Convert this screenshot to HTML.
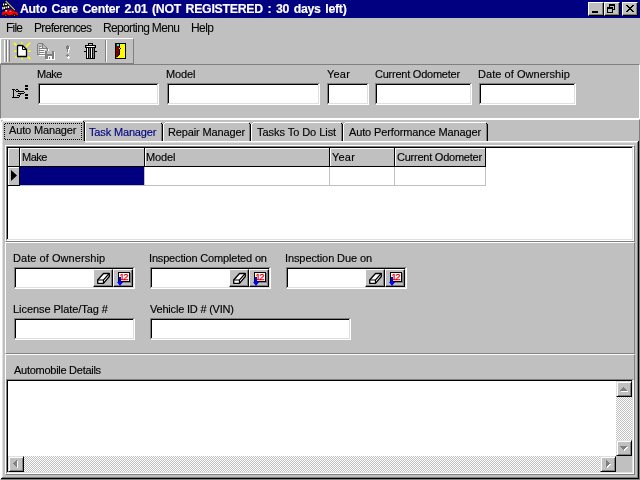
<!DOCTYPE html>
<html>
<head>
<meta charset="utf-8">
<title>Auto Care Center 2.01</title>
<style>
html,body{margin:0;padding:0;}
body{width:640px;height:480px;overflow:hidden;background:#c0c0c0;position:relative;
  font-family:"Liberation Sans",sans-serif;font-size:11px;color:#000;}
.a{position:absolute;}
svg{position:absolute;overflow:visible;}
.t{position:absolute;white-space:nowrap;line-height:13px;height:13px;will-change:transform;-webkit-text-stroke:0.15px currentColor;}
.m{font-size:12px;line-height:14px;height:14px;-webkit-text-stroke:0.05px currentColor;}
#title{left:0;top:0;width:640px;height:18px;background:#000080;}
#title .cap{left:20px;top:1px;color:#fff;font-weight:bold;font-size:12.3px;line-height:16px;height:16px;}
.tb{position:absolute;top:2px;width:16px;height:14px;background:#c0c0c0;box-sizing:border-box;
  border:1px solid;border-color:#fff #000 #000 #fff;box-shadow:inset -1px -1px 0 #808080;}
.inp{position:absolute;background:#fff;box-sizing:border-box;border:1px solid;border-color:#808080 #fff #fff #808080;
  box-shadow:inset -1px -1px 0 #dfdfdf,inset 1px 1px 0 #000;}
.sunk1{position:absolute;box-sizing:border-box;border:1px solid;border-color:#808080 #fff #fff #808080;}
.raised{position:absolute;box-sizing:border-box;border:1px solid;border-color:#fff #808080 #808080 #fff;}
.sbtn{position:absolute;width:16px;height:16px;background:#c0c0c0;box-sizing:border-box;border:1px solid;border-color:#dfdfdf #000 #000 #dfdfdf;
  box-shadow:inset 1px 1px 0 #fff,inset -1px -1px 0 #808080;}
.track{position:absolute;background-color:#fff;
  background-image:linear-gradient(45deg,#c0c0c0 25%,transparent 25%,transparent 75%,#c0c0c0 75%),linear-gradient(45deg,#c0c0c0 25%,transparent 25%,transparent 75%,#c0c0c0 75%);
  background-size:2px 2px;background-position:0 0,1px 1px;}
.dbtn{position:absolute;top:269px;width:20px;height:18px;background:#c0c0c0;box-sizing:border-box;border:1px solid;border-color:#fff #000 #000 #fff;
  box-shadow:inset -1px -1px 0 #808080;}
.hc{position:absolute;top:148px;height:18px;background:#c0c0c0;box-sizing:border-box;border-top:1px solid #fff;border-left:1px solid #fff;}
.cal{position:absolute;left:4px;top:2px;padding-right:1px;width:12px;height:10px;box-sizing:border-box;border:1px solid #000;background:#fff;
  color:#f00;font-size:9px;line-height:8px;text-align:center;letter-spacing:-0.9px;text-indent:0;-webkit-text-stroke:0.3px #f00;box-shadow:1px 1px 0 #808080;}
</style>
</head>
<body>

<!-- title bar -->
<div id="title" class="a">
  <svg id="appicon" style="left:2px;top:1px" width="17" height="17" viewBox="0 0 17 17">
    <path d="M0.200 3L2.800 0.800L7.600 5.400L6 8.600L1 9.600L0 6Z" fill="#000"/>
    <path d="M1 2.400h1.100v2.200h-1.100zM2.900 2.600h2.200v1.300h-2.200zM0.250 6.100h1.150v2.300h-1.150zM1.800 5.800h1.100v2.200h-1.100zM3.600 5.400h1.300v1.900h-1.300zM5.700 5h1.500v1.900h-1.500z" fill="#fff"/>
    <path d="M3.400 0.200L12.600 9.400" stroke="#000" stroke-width="1.600" fill="none"/>
    <path d="M3.700 0L12.900 9.200" stroke="#c8c070" stroke-width="1.100" fill="none"/>
    <path d="M0.300 14.800V12.500Q0.300 11 2.200 10.800L3.300 10.500L4.800 8.900H10L12.300 10.700Q16.200 11.200 16.200 13.200V14.800Z" fill="#000"/>
    <path d="M0 12.300Q0 10.500 2 10.400L3.300 10.200L5 8.600H10L12.500 10.500Q16 11 16 12.700V13.300Q16 14.200 14.500 14.200H1Q0 14.200 0 13.300Z" fill="#f00"/>
    <path d="M6.300 9.300H9.800L11.300 10.500H6.300Z" fill="#600000"/>
    <path d="M7.300 9.800h2.200v0.700h-2.200z" fill="#fff"/>
    <path d="M3.400 9h1.500v1.500h-1.500z" fill="#fff"/>
    <circle cx="3.800" cy="14.300" r="1.700" fill="#000"/><circle cx="12.400" cy="14.300" r="1.700" fill="#000"/>
    <circle cx="3.800" cy="14.300" r="0.700" fill="#909090"/><circle cx="12.400" cy="14.300" r="0.700" fill="#909090"/>
  </svg>
  <div class="t cap" style="letter-spacing:-0.27px;word-spacing:1.5px">Auto Care Center 2.01 (NOT REGISTERED : 30 days left)</div>
  <div class="tb" style="left:588px"><div class="a" style="left:3px;top:8px;width:6px;height:2px;background:#000"></div></div>
  <div class="tb" style="left:604px">
    <div class="a" style="left:4px;top:1px;width:6px;height:6px;box-sizing:border-box;border:1px solid #000;border-top-width:2px"></div>
    <div class="a" style="left:2px;top:4px;width:6px;height:6px;box-sizing:border-box;border:1px solid #000;border-top-width:2px;background:#c0c0c0"></div>
  </div>
  <div class="tb" style="left:622px">
    <svg style="left:3px;top:2px" width="8" height="7" viewBox="0 0 8 7" shape-rendering="crispEdges"><path d="M0 0h2v1h1v1h2v-1h1v-1h2v1h-1v1h-1v1h-1v1h1v1h1v1h1v1h-2v-1h-1v-1h-2v1h-1v1h-2v-1h1v-1h1v-1h1v-1h-1v-1h-1v-1h-1z" fill="#000"/></svg>
  </div>
</div>

<!-- menu -->
<div class="t m" style="left:6px;top:21px;letter-spacing:-0.8px">File</div>
<div class="t m" style="left:34px;top:21px;letter-spacing:-0.67px">Preferences</div>
<div class="t m" style="left:103px;top:21px;letter-spacing:-0.65px">Reporting Menu</div>
<div class="t m" style="left:191px;top:21px;letter-spacing:-0.57px">Help</div>

<!-- toolbar -->
<div class="a" id="toolbar" style="left:0;top:38px;width:134px;height:26px;box-sizing:border-box;border-top:1px solid #fff;border-left:1px solid #fff;border-right:1px solid #808080;border-bottom:1px solid #808080"></div>
<svg id="tbicons" style="left:0;top:38px" width="134" height="26" viewBox="0 38 134 26" shape-rendering="crispEdges">
  <!-- gripper -->
  <rect x="4" y="40" width="1" height="22" fill="#fff"/><rect x="6" y="40" width="1" height="22" fill="#808080"/>
  <rect x="7" y="40" width="1" height="22" fill="#fff"/><rect x="9" y="40" width="1" height="22" fill="#808080"/>
  <!-- new document -->
  <g fill="#ff0" shape-rendering="auto" stroke="#ff0" stroke-width="1.600" stroke-linecap="square">
    <path d="M14.500 43.500L16 45M21.800 43v1.200M29.500 43.500L26.500 46.500M14.800 51.200h1.400M28.500 51.200h1.400M15.800 57.200l1-1M22 57.800v0.800M28.200 57l1.600 1.600"/>
  </g>
  <path d="M17.500 46V56.500H26.500V49.500L22.500 45.500H18Z" fill="#fff" stroke="#000" stroke-width="1.300" stroke-linejoin="round" shape-rendering="auto"/>
  <path d="M22.500 46V49.500H26" fill="none" stroke="#000" stroke-width="1" shape-rendering="auto"/>
  <!-- save (disabled) -->
  <g fill="none" stroke="#fff" stroke-width="1" transform="translate(1,1)">
    <path d="M37.500 54.500H44M47.500 48V50"/>
    <path d="M39 46.500H42M39 48.500H45M39 50.500H44M39 52.500H44"/>
  </g>
  <path d="M54 52V59H46V60H55V52Z" fill="#fff"/>
  <g fill="none" stroke="#808080" stroke-width="1">
    <path d="M37.500 43.500H42.500L47.500 48.500V51M37.500 43.500V54.500H45M42.500 43.500V48.500H47.500"/>
    <path d="M39 46.500H41M39 48.500H42M39 50.500H44M39 52.500H44"/>
  </g>
  <path d="M45 51H47V54H52V51H54V59H45Z" fill="#808080"/>
  <path d="M48 56H52V59H48Z" fill="#fff"/><path d="M49 57H50V59H49Z" fill="#808080"/>
  <!-- exclamation (disabled) -->
  <path d="M68 47h2v3h-1v3h-1zM68 56h1v1h1v1h-1v1h-1v-1h-1v-1h1z" fill="#fff"/>
  <path d="M67 45h1v1h1v3h-1v3h-1v-3h-1v-3h1zM67 54h1v1h1v1h-1v1h-1v-1h-1v-1h1z" fill="#808080"/>
  <!-- trash can -->
  <path d="M88.500 43.500H92.500V45.500H88.500Z" fill="#c0c0c0" stroke="#000"/>
  <path d="M85.500 45.500H95.500V47.500H85.500Z" fill="#c0c0c0" stroke="#000"/><path d="M87 46H94V47H87Z" fill="#fff"/>
  <path d="M86.500 47.500H94.500V58.500H86.500Z" fill="#c0c0c0" stroke="#000"/>
  <path d="M87 48H88V58H87Z" fill="#fff"/>
  <path d="M88 48h1v10h-1zM90 48h1v10h-1zM92 48h1v10h-1z" fill="#000"/>
  <path d="M91 48h1v10h-1z" fill="#fff"/><path d="M89 48h1v10h-1zM93 48h1v10h-1z" fill="#808080"/>
  <path d="M84 51h2v1h-2zM95 51h2v1h-2z" fill="#000"/>
  <!-- separator -->
  <rect x="105" y="40" width="1" height="22" fill="#808080"/><rect x="106" y="40" width="1" height="22" fill="#fff"/>
  <!-- exit door -->
  <rect x="115" y="43" width="11" height="16" fill="#000"/>
  <rect x="116" y="44" width="4" height="14" fill="#800000"/>
  <rect x="120" y="44" width="5" height="14" fill="#ff0"/>
  <path d="M120 54v4h-4z" fill="#ff0" shape-rendering="auto"/>
  <path d="M119 44h1v11h-1zM118 55h1v1h-1zM117 56h1v1h-1zM120 48h1v1h-1z" fill="#000"/>
  <rect x="119" y="48" width="1" height="1" fill="#ff0"/>
  <rect x="117" y="44" width="2" height="2" fill="#0ff"/>
</svg>

<!-- top panel -->
<div class="sunk1" style="left:0;top:64px;width:640px;height:55px"></div>
<svg id="hand" style="left:10px;top:84px" width="20" height="16" viewBox="10 84 20 16" shape-rendering="crispEdges">
  <path fill="#000" d="M12 89h3v1h-3zM13 90h1v7h-1zM12 97h3v1h-3zM16 89h2v1h-2zM15 90h1v1h-1zM18 90h1v1h-1zM16 91h8v1h-8zM24 92h1v1h-1zM18 93h6v1h-6zM20 94h1v1h-1zM17 95h3v1h-3zM19 96h1v1h-1zM15 97h4v1h-4z"/>
  <path fill="#000" d="M25 85h3v2h-3zM25 88h3v2h-3zM25 94h3v2h-3zM25 97h3v2h-3z"/>
</svg>
<div class="t" style="left:37px;top:68px;letter-spacing:-0.5px">Make</div>
<div class="t" style="left:166px;top:68px;letter-spacing:-0.15px">Model</div>
<div class="t" style="left:327px;top:68px;letter-spacing:0.2px">Year</div>
<div class="t" style="left:375px;top:68px;letter-spacing:-0.24px">Current Odometer</div>
<div class="t" style="left:478px;top:68px;letter-spacing:0.05px">Date of Ownership</div>
<div class="inp" style="left:38px;top:83px;width:121px;height:22px"></div>
<div class="inp" style="left:167px;top:83px;width:153px;height:22px"></div>
<div class="inp" style="left:327px;top:83px;width:42px;height:22px"></div>
<div class="inp" style="left:375px;top:83px;width:97px;height:22px"></div>
<div class="inp" style="left:479px;top:83px;width:97px;height:22px"></div>

<!-- outer raised panel + tab control -->
<div class="raised" style="left:0;top:119px;width:640px;height:361px"></div>
<svg id="tabs" style="left:0;top:119px" width="640" height="361" viewBox="0 119 640 361" shape-rendering="crispEdges">
  <g fill="#fff">
    <rect x="3" y="120" width="80" height="1"/><rect x="2" y="121" width="1" height="1"/><rect x="1" y="122" width="1" height="356"/>
    <rect x="85" y="122" width="76" height="1"/><rect x="85" y="123" width="1" height="18"/>
    <rect x="165" y="122" width="84" height="1"/><rect x="164" y="123" width="1" height="1"/><rect x="163" y="124" width="1" height="17"/>
    <rect x="253" y="122" width="88" height="1"/><rect x="252" y="123" width="1" height="1"/><rect x="251" y="124" width="1" height="17"/>
    <rect x="345" y="122" width="141" height="1"/><rect x="344" y="123" width="1" height="1"/><rect x="343" y="124" width="1" height="17"/>
    <rect x="85" y="141" width="553" height="1"/>
  </g>
  <g fill="#dfdfdf"><rect x="2" y="122" width="1" height="355"/><rect x="85" y="142" width="552" height="1"/><rect x="3" y="121" width="80" height="1"/></g>
  <g fill="#808080">
    <rect x="83" y="122" width="1" height="19"/>
    <rect x="161" y="124" width="1" height="17"/><rect x="249" y="124" width="1" height="17"/><rect x="341" y="124" width="1" height="17"/><rect x="486" y="124" width="1" height="17"/>
    <rect x="637" y="142" width="1" height="336"/><rect x="2" y="477" width="636" height="1"/>
  </g>
  <g fill="#000">
    <rect x="83" y="121" width="1" height="1"/><rect x="84" y="122" width="1" height="19"/>
    <rect x="161" y="123" width="1" height="1"/><rect x="162" y="124" width="1" height="17"/>
    <rect x="249" y="123" width="1" height="1"/><rect x="250" y="124" width="1" height="17"/>
    <rect x="341" y="123" width="1" height="1"/><rect x="342" y="124" width="1" height="17"/>
    <rect x="486" y="123" width="1" height="1"/><rect x="487" y="124" width="1" height="17"/>
    <rect x="638" y="141" width="1" height="338"/><rect x="1" y="478" width="638" height="1"/>
  </g>
  <path d="M5 123.500H82M5 139.500H82M4.500 124V139M81.500 123V140" fill="none" stroke="#000" stroke-width="1" stroke-dasharray="1 1"/>
</svg>
<div class="t" style="left:9px;top:124px;letter-spacing:-0.15px">Auto Manager</div>
<div class="t" style="left:89px;top:126px;letter-spacing:-0.15px;color:#000080">Task Manager</div>
<div class="t" style="left:168px;top:126px;letter-spacing:-0.13px">Repair Manager</div>
<div class="t" style="left:257px;top:126px;letter-spacing:-0.05px">Tasks To Do List</div>
<div class="t" style="left:349px;top:126px;letter-spacing:-0.13px">Auto Performance Manager</div>

<!-- grid panel -->
<div class="raised" style="left:5px;top:145px;width:630px;height:97px"></div>
<div class="inp" style="left:6px;top:146px;width:628px;height:95px"></div>
<div id="grid">
  <div class="hc" style="left:8px;width:11px"></div>
  <div class="hc" style="left:20px;width:124px"></div>
  <div class="hc" style="left:145px;width:184px"></div>
  <div class="hc" style="left:330px;width:64px"></div>
  <div class="hc" style="left:395px;width:90px"></div>
  <div class="hc" style="left:8px;width:11px;top:167px"></div>
  <div class="a" style="left:20px;top:167px;width:124px;height:18px;background:#000080"></div>
  <!-- black lines -->
  <div class="a" style="left:8px;top:166px;width:478px;height:1px;background:#000"></div>
  <div class="a" style="left:8px;top:185px;width:12px;height:1px;background:#000"></div>
  <div class="a" style="left:19px;top:148px;width:1px;height:38px;background:#000"></div>
  <div class="a" style="left:144px;top:148px;width:1px;height:19px;background:#000"></div>
  <div class="a" style="left:329px;top:148px;width:1px;height:19px;background:#000"></div>
  <div class="a" style="left:394px;top:148px;width:1px;height:19px;background:#000"></div>
  <div class="a" style="left:485px;top:148px;width:1px;height:19px;background:#000"></div>
  <!-- light lines -->
  <div class="a" style="left:20px;top:185px;width:466px;height:1px;background:#c0c0c0"></div>
  <div class="a" style="left:144px;top:167px;width:1px;height:18px;background:#c0c0c0"></div>
  <div class="a" style="left:329px;top:167px;width:1px;height:18px;background:#c0c0c0"></div>
  <div class="a" style="left:394px;top:167px;width:1px;height:18px;background:#c0c0c0"></div>
  <div class="a" style="left:485px;top:167px;width:1px;height:18px;background:#c0c0c0"></div>
  <svg style="left:11px;top:170px" width="6" height="11" viewBox="0 0 6 11"><path d="M0 0L6 5.5L0 11Z" fill="#000"/></svg>
  <div class="t" style="left:22px;top:151px;letter-spacing:-0.5px">Make</div>
  <div class="t" style="left:146px;top:151px;letter-spacing:-0.15px">Model</div>
  <div class="t" style="left:332px;top:151px;letter-spacing:0.2px">Year</div>
  <div class="t" style="left:397px;top:151px;letter-spacing:-0.24px">Current Odometer</div>
</div>

<!-- middle panel -->
<div class="raised" style="left:5px;top:242px;width:630px;height:112px"></div>
<div class="t" style="left:13px;top:252px;letter-spacing:0.06px">Date of Ownership</div>
<div class="t" style="left:149px;top:252px;letter-spacing:-0.17px">Inspection Completed on</div>
<div class="t" style="left:285px;top:252px;letter-spacing:-0.1px">Inspection Due on</div>
<div class="t" style="left:13px;top:303px;letter-spacing:-0.06px">License Plate/Tag #</div>
<div class="t" style="left:150px;top:303px;letter-spacing:-0.2px">Vehicle ID # (VIN)</div>
<div class="inp" style="left:14px;top:267px;width:121px;height:22px"></div>
<div class="inp" style="left:150px;top:267px;width:121px;height:22px"></div>
<div class="inp" style="left:286px;top:267px;width:121px;height:22px"></div>
<div class="inp" style="left:14px;top:318px;width:121px;height:22px"></div>
<div class="inp" style="left:150px;top:318px;width:201px;height:22px"></div>
<div id="datebtns">
<div class="dbtn" style="left:93px"><svg style="left:3px;top:2px" width="13" height="12" viewBox="0 0 13 12"><path d="M0.700 8L6.500 1.500H12.300V4.500L6.500 11.300H0.700Z" fill="#fff" stroke="#000" stroke-width="1.300" stroke-linejoin="round"/><path d="M0.700 8H6.500L12.300 1.500M6.500 8V11.300" fill="none" stroke="#000" stroke-width="1.200"/></svg></div>
<div class="dbtn" style="left:113px"><div class="cal">12</div><svg style="left:3px;top:7px" width="6" height="9" viewBox="0 0 6 9"><path d="M2 0H4V5H6L3 9L0 5H2Z" fill="#00f"/></svg></div>
<div class="dbtn" style="left:229px"><svg style="left:3px;top:2px" width="13" height="12" viewBox="0 0 13 12"><path d="M0.700 8L6.500 1.500H12.300V4.500L6.500 11.300H0.700Z" fill="#fff" stroke="#000" stroke-width="1.300" stroke-linejoin="round"/><path d="M0.700 8H6.500L12.300 1.500M6.500 8V11.300" fill="none" stroke="#000" stroke-width="1.200"/></svg></div>
<div class="dbtn" style="left:249px"><div class="cal">12</div><svg style="left:3px;top:7px" width="6" height="9" viewBox="0 0 6 9"><path d="M2 0H4V5H6L3 9L0 5H2Z" fill="#00f"/></svg></div>
<div class="dbtn" style="left:365px"><svg style="left:3px;top:2px" width="13" height="12" viewBox="0 0 13 12"><path d="M0.700 8L6.500 1.500H12.300V4.500L6.500 11.300H0.700Z" fill="#fff" stroke="#000" stroke-width="1.300" stroke-linejoin="round"/><path d="M0.700 8H6.500L12.300 1.500M6.500 8V11.300" fill="none" stroke="#000" stroke-width="1.200"/></svg></div>
<div class="dbtn" style="left:385px"><div class="cal">12</div><svg style="left:3px;top:7px" width="6" height="9" viewBox="0 0 6 9"><path d="M2 0H4V5H6L3 9L0 5H2Z" fill="#00f"/></svg></div>
</div>

<!-- details panel -->
<div class="raised" style="left:5px;top:354px;width:630px;height:121px"></div>
<div class="t" style="left:14px;top:364px;letter-spacing:-0.27px">Automobile Details</div>
<div class="inp" style="left:6px;top:379px;width:628px;height:95px"></div>
<div class="track" style="left:616px;top:397px;width:16px;height:43px"></div>
<div class="track" style="left:24px;top:456px;width:576px;height:16px"></div>
<div class="a" style="left:616px;top:456px;width:16px;height:16px;background:#c0c0c0"></div>
<div class="sbtn" style="left:616px;top:381px"></div>
<div class="sbtn" style="left:616px;top:440px"></div>
<div class="sbtn" style="left:8px;top:456px"></div>
<div class="sbtn" style="left:600px;top:456px"></div>
<svg id="arrows" style="left:0;top:379px" width="640" height="95" viewBox="0 379 640 95" shape-rendering="crispEdges">
  <g fill="#fff" transform="translate(1,1)">
    <path d="M623 387h1v1h1v1h1v1h1v1h-7v-1h1v-1h1v-1h1z"/>
    <path d="M620 446h7v1h-1v1h-1v1h-1v1h-1v-1h-1v-1h-1v-1h-1z"/>
    <path d="M16 460h1v7h-1v-1h-1v-1h-1v-1h-1v-1h1v-1h1v-1h1z"/>
    <path d="M606 460h1v1h1v1h1v1h1v1h-1v1h-1v1h-1v1h-1z"/>
  </g>
  <g fill="#808080">
    <path d="M623 387h1v1h1v1h1v1h1v1h-7v-1h1v-1h1v-1h1z"/>
    <path d="M620 446h7v1h-1v1h-1v1h-1v1h-1v-1h-1v-1h-1v-1h-1z"/>
    <path d="M16 460h1v7h-1v-1h-1v-1h-1v-1h-1v-1h1v-1h1v-1h1z"/>
    <path d="M606 460h1v1h1v1h1v1h1v1h-1v1h-1v1h-1v1h-1z"/>
  </g>
</svg>

</body>
</html>
